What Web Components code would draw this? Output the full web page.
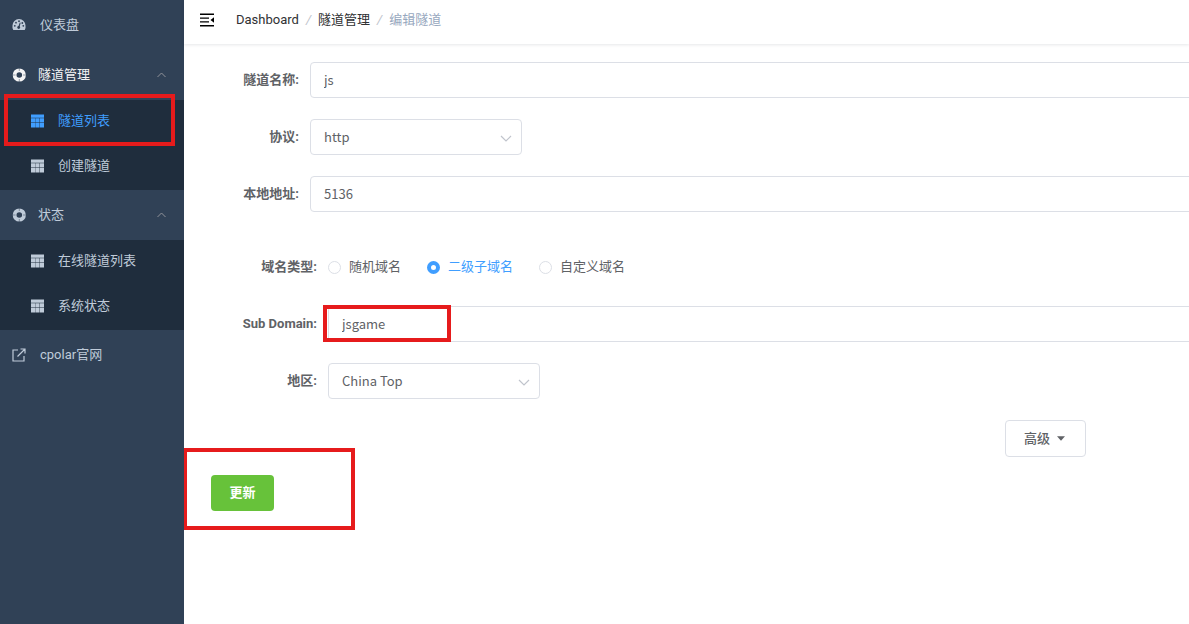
<!DOCTYPE html>
<html lang="zh-CN">
<head>
<meta charset="utf-8">
<meta name="viewport" content="width=device-width, initial-scale=1">
<title>编辑隧道</title>
<style>
  html, body { margin: 0; height: 100%; }
  body {
    font: 13px/20px Roboto, "Noto Sans CJK SC", sans-serif;
    color: #606266;
    background: #fff;
    --line: #dcdfe6;
    --primary: #409eff;
    --field-font: "Noto Sans CJK SC", sans-serif;
  }
</style>
</head>
<body>
<tunnel-app></tunnel-app>
<script>
const define = (name, html, setup) => {
  const template = document.createElement('template');
  template.innerHTML = html;
  customElements.define(name, class extends HTMLElement {
    connectedCallback() {
      if (this.shadowRoot) return;
      const root = this.attachShadow({ mode: 'open' });
      root.append(template.content.cloneNode(true));
      if (setup) setup(this, root);
    }
  });
};

const icons = {
  gauge: '<path fill="currentColor" d="M2.300 13A6.500 6.500 0 0 1 1.500 8.500a6.500 6.500 0 0 1 13 0 6.500 6.500 0 0 1-.8 4.500z"/><g fill="#304156"><circle cx="3.800" cy="8.800" r=".9"/><circle cx="5" cy="5.700" r=".9"/><circle cx="8" cy="4.200" r=".9"/><circle cx="11.300" cy="6" r=".9"/><circle cx="12.300" cy="8.800" r=".9"/><circle cx="7.700" cy="10.500" r="1.400"/><path d="m7.200 10 1.600-4.500.9.300-1.300 4.700z"/></g>',
  ring: '<circle cx="8.300" cy="8" r="4.700" fill="none" stroke="currentColor" stroke-width="3.800"/><path d="M8.300 1v3M8.300 12v3M1 8h3.500M12 8h3.500" stroke="#304156" stroke-width=".8" opacity=".6"/>',
  grid: '<path fill="currentColor" d="M2 1.500h13v3.200H2zM2 5.200h4v4.400H2zM6.300 5.200h4v4.400h-4zM10.700 5.200H15v4.400h-4.300zM2 10h4v4.500H2zM6.300 10h4v4.500h-4zM10.700 10H15v4.500h-4.300z"/>',
  external: '<path fill="none" stroke="currentColor" stroke-width="1.200" d="M7 3H2v11h11V9M6.500 9.500l7-7M9.500 2h4.500v4.500"/>',
  fold: '<path fill="currentColor" d="M1 1.500h14V3H1zM1 13h14v1.500H1zM1 5.400h9v1.400H1zM1 9.200h9v1.400H1zM15 5.300v5.400L11.500 8z"/>'
};

define('ui-icon', `
  <style>
    :host { display: block; flex: none; width: 16px; height: 16px; }
    svg { display: block; width: 100%; height: 100%; }
  </style>
  <svg viewBox="0 0 16 16" aria-hidden="true"></svg>`,
  (host, root) => { root.querySelector('svg').innerHTML = icons[host.getAttribute('name')]; });

/* Red frame laid over the spot that the guide points at. */
define('mark-frame', `
  <style>
    :host { position: absolute; box-sizing: border-box; border: 4px solid #e61b1c; pointer-events: none; z-index: 2; }
  </style>`);

define('menu-item', `
  <style>
    :host { display: block; position: relative; color: #bfcbd9; }
    :host([sub]) { background: #1f2d3d; }
    :host([open]) { color: #f4f4f5; }
    :host([active]) { color: var(--primary); }
    a { display: flex; align-items: center; height: 50px; padding: 0 18px 0 11px; gap: 13px; box-sizing: border-box; color: inherit; text-decoration: none; }
    :host([group]) a { gap: 11px; }
    :host([sub]) a { height: 45px; padding-left: 29px; padding-bottom: 3px; }
    span { flex: 1; white-space: nowrap; }
    .arrow { display: none; width: 9px; height: 6px; color: #909399; }
    :host([group]) .arrow { display: block; }
  </style>
  <a href="#"><span><slot></slot></span>
    <svg class="arrow" viewBox="0 0 9 6"><path d="m.5 5 4-4 4 4" fill="none" stroke="currentColor"/></svg></a>
  <slot name="mark"></slot>`,
  (host, root) => {
    const icon = document.createElement('ui-icon');
    icon.setAttribute('name', host.getAttribute('icon'));
    root.querySelector('a').prepend(icon);
  });

define('side-bar', `
  <style>
    :host { display: block; background: #304156; }
    mark-frame { inset: -6px 9px -1px 4px; }
  </style>
  <nav>
    <menu-item icon="gauge">仪表盘</menu-item>
    <menu-item icon="ring" group open>隧道管理</menu-item>
    <menu-item icon="grid" sub active>隧道列表<mark-frame slot="mark"></mark-frame></menu-item>
    <menu-item icon="grid" sub>创建隧道</menu-item>
    <menu-item icon="ring" group>状态</menu-item>
    <menu-item icon="grid" sub>在线隧道列表</menu-item>
    <menu-item icon="grid" sub>系统状态</menu-item>
    <menu-item icon="external">cpolar官网</menu-item>
  </nav>`);

define('top-bar', `
  <style>
    :host { display: flex; align-items: center; height: 44px; padding: 0 15px 4px; gap: 21px; box-sizing: border-box; box-shadow: 0 1px 3px rgba(0, 21, 41, .1); }
    button { border: 0; padding: 0; background: none; color: #000; }
    nav { display: flex; gap: 7px; }
    a { color: #303133; text-decoration: none; }
    i { color: #c0c4cc; }
    span { color: #97a8be; }
  </style>
  <button type="button" aria-label="Menu"><ui-icon name="fold"></ui-icon></button>
  <nav><a href="#">Dashboard</a><i>/</i><a href="#">隧道管理</a><i>/</i><span>编辑隧道</span></nav>`);

const rowStyle = `
  :host { display: grid; grid-template-columns: 115px minmax(0, 1fr); column-gap: 11px; align-items: center; height: 36px; position: relative; }
  :host([nested]) { grid-template-columns: 133px minmax(0, 1fr); }
  .name { text-align: right; font-weight: 700; white-space: nowrap; }`;

define('text-field', `
  <style>${rowStyle}
    input { width: 100%; height: 36px; box-sizing: border-box; border: 1px solid var(--line); border-radius: 4px; padding: 0 13px 1px; background: #fff; color: inherit; font: 13px/20px var(--field-font); outline: 0; }
  </style>
  <label class="name" for="field"></label>
  <input id="field" type="text">
  <slot></slot>`,
  (host, root) => {
    root.querySelector('label').textContent = host.getAttribute('label');
    root.querySelector('input').value = host.getAttribute('value');
  });

define('select-field', `
  <style>${rowStyle}
    div { display: flex; align-items: center; width: 212px; position: relative; }
    select { appearance: none; width: 100%; height: 36px; box-sizing: border-box; border: 1px solid var(--line); border-radius: 4px; padding: 0 13px; background: #fff; color: inherit; font: 13px/20px var(--field-font); outline: 0; }
    svg { position: absolute; right: 10px; top: 16px; width: 12px; height: 7px; pointer-events: none; }
  </style>
  <label class="name" for="field"></label>
  <div><select id="field"><option></option></select>
  <svg viewBox="0 0 12 7"><path d="m1 1 5 5 5-5" fill="none" stroke="#c0c4cc" stroke-width="1.200"/></svg></div>`,
  (host, root) => {
    root.querySelector('label').textContent = host.getAttribute('label');
    root.querySelector('option').textContent = host.getAttribute('value');
  });

define('domain-type', `
  <style>${rowStyle}
    .options { display: flex; gap: 26px; }
    label { display: flex; align-items: center; gap: 8px; }
    input { appearance: none; flex: none; width: 13px; height: 13px; box-sizing: border-box; margin: 0; border: 1px solid var(--line); border-radius: 50%; background: #fff; }
    input:checked { border: 4px solid var(--primary); }
    label:has(:checked) { color: var(--primary); }
  </style>
  <div class="name" id="caption">域名类型:</div>
  <div class="options" role="radiogroup" aria-labelledby="caption">
    <label><input type="radio" name="type"><span>随机域名</span></label>
    <label><input type="radio" name="type" checked><span>二级子域名</span></label>
    <label><input type="radio" name="type"><span>自定义域名</span></label>
  </div>`);

define('tunnel-form', `
  <style>
    :host { display: block; padding: 18px 0; overflow: hidden; }
    form, .group { display: grid; row-gap: 21px; }
    .group { margin-top: 16px; }
    .fields { display: grid; row-gap: 21px; margin-right: -20px; }
    button { font: inherit; border-radius: 4px; height: 36px; padding: 0 18px; }
    .more { display: flex; justify-content: flex-end; padding-right: 103px; }
    .more button { display: flex; align-items: center; gap: 7px; width: 81px; height: 37px; border: 1px solid var(--line); background: #fff; color: inherit; font-weight: 500; }
    .more svg { width: 8px; height: 5px; }
    .submit { position: relative; padding: 18px 27px; margin-top: -21px; }
    .submit button { display: block; width: 63px; border: 0; background: #67c23a; color: #fff; font-weight: 700; }
    .submit mark-frame { left: -1px; top: -9px; width: 172px; height: 82px; }
    text-field mark-frame { left: 139px; top: -1px; width: 128px; height: 37px; }
  </style>
  <form>
    <div class="fields">
      <text-field label="隧道名称:" value="js"></text-field>
      <select-field label="协议:" value="http"></select-field>
      <text-field label="本地地址:" value="5136"></text-field>
      <div class="group">
        <domain-type nested></domain-type>
        <text-field nested label="Sub Domain:" value="jsgame"><mark-frame></mark-frame></text-field>
        <select-field nested label="地区:" value="China Top"></select-field>
      </div>
    </div>
    <div class="more"><button type="button">高级<svg viewBox="0 0 9 5" aria-hidden="true"><path d="M0 0h9L4.500 5z" fill="currentColor"/></svg></button></div>
    <div class="submit"><button type="button">更新</button><mark-frame></mark-frame></div>
  </form>`);

define('tunnel-app', `
  <style>
    :host { display: grid; grid-template-columns: 184px minmax(0, 1fr); min-height: 100vh; }
  </style>
  <side-bar></side-bar>
  <main><top-bar></top-bar><tunnel-form></tunnel-form></main>`);
</script>
</body>
</html>
